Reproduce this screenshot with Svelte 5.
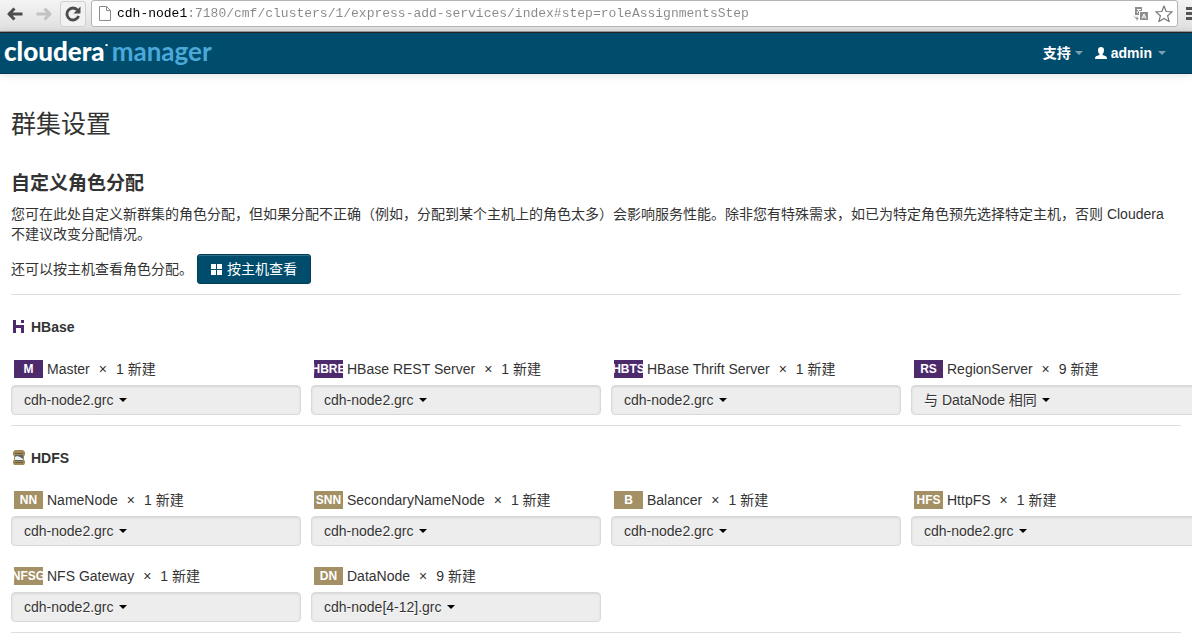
<script lang="ts">
  const url = 'cdh-node1:7180/cmf/clusters/1/express-add-services/index#step=roleAssignmentsStep';

  const services = [
    {
      id: 'hbase',
      name: 'HBase',
      roles: [
        { badge: 'M', name: 'Master', count: 1, host: 'cdh-node2.grc' },
        { badge: 'HBRE', name: 'HBase REST Server', count: 1, host: 'cdh-node2.grc' },
        { badge: 'HBTS', name: 'HBase Thrift Server', count: 1, host: 'cdh-node2.grc' },
        { badge: 'RS', name: 'RegionServer', count: 9, host: '与 DataNode 相同' }
      ]
    },
    {
      id: 'hdfs',
      name: 'HDFS',
      roles: [
        { badge: 'NN', name: 'NameNode', count: 1, host: 'cdh-node2.grc' },
        { badge: 'SNN', name: 'SecondaryNameNode', count: 1, host: 'cdh-node2.grc' },
        { badge: 'B', name: 'Balancer', count: 1, host: 'cdh-node2.grc' },
        { badge: 'HFS', name: 'HttpFS', count: 1, host: 'cdh-node2.grc' },
        { badge: 'NFSG', name: 'NFS Gateway', count: 1, host: 'cdh-node2.grc' },
        { badge: 'DN', name: 'DataNode', count: 9, host: 'cdh-node[4-12].grc' }
      ]
    }
  ];
</script>

<div class="window">
  <div class="toolbar">
    <button class="tool" aria-label="后退">
      <svg width="16" height="14" viewBox="0 0 16 14" fill="none" stroke="#4d4d4d" stroke-width="3" stroke-linejoin="round">
        <path d="M15.5 7H3M7.5 1.5L2 7L7.5 12.5" />
      </svg>
    </button>
    <button class="tool" aria-label="前进">
      <svg width="16" height="14" viewBox="0 0 16 14" fill="none" stroke="#c2c2c2" stroke-width="3" stroke-linejoin="round">
        <path d="M0.5 7H13M8.5 1.5L14 7L8.5 12.5" />
      </svg>
    </button>
    <button class="tool reload" aria-label="重新加载">
      <svg width="16" height="16" viewBox="0 0 16 16">
        <path d="M12.6 4.2A6 6 0 1 0 13.6 10" fill="none" stroke="#4d4d4d" stroke-width="2.8" />
        <path d="M15.5 0.5V7.5H8.5Z" fill="#4d4d4d" />
      </svg>
    </button>
    <div class="address">
      <svg width="12" height="15" viewBox="0 0 12 15" fill="#fff" stroke="#8a8a8a">
        <path d="M0.5 0.5H7.5L11.5 4.5V14.5H0.5ZM7.5 0.5V4.5H11.5" />
      </svg>
      <input type="text" value={url} aria-label="地址" spellcheck="false" />
      <button class="tool" aria-label="翻译此页">
        <svg width="15" height="14" viewBox="0 0 15 14">
          <path d="M1 0H8V4H5V8H1Z" fill="#8f8f8f" />
          <path d="M3 2.5H7M5 2.5L3 6" stroke="#fff" fill="none" />
          <path d="M6 5H14V13H6Z" fill="#8f8f8f" />
          <path d="M8 11.5L10 7L12 11.5M9 10H11" stroke="#fff" fill="none" />
          <path d="M0.5 9.5L2 11.5H4.5M3 9.5V13.5" stroke="#8f8f8f" fill="none" />
        </svg>
      </button>
      <button class="tool" aria-label="收藏">
        <svg width="18" height="18" viewBox="0 0 18 18" fill="#fff" stroke="#777" stroke-width="1.2" stroke-linejoin="round">
          <path d="M9 1L11.2 6.5L17.2 6.9L12.6 10.7L14.1 16.6L9 13.4L3.9 16.6L5.4 10.7L0.8 6.9L6.8 6.5Z" />
        </svg>
      </button>
    </div>
    <button class="tool menu" aria-label="菜单">
      <svg width="16" height="14" viewBox="0 0 16 14" fill="#555">
        <path d="M0 0H16V3H0ZM0 5H16V8H0ZM0 10H16V13H0Z" />
      </svg>
    </button>
  </div>

  <header>
    <a class="brand" href="#home"><b>cloudera</b><sup>•</sup><span>manager</span></a>
    <nav>
      <button>支持<i class="caret"></i></button>
      <button>
        <svg width="12" height="12" viewBox="0 0 12 12" fill="#fff">
          <path d="M3 3C3 1 4 0 6 0S9 1 9 3C9 5 8.4 6 7.6 7V8L11 9.2Q12 9.6 12 12H0Q0 9.6 1 9.2L4.4 8V7C3.6 6 3 5 3 3Z" />
        </svg>
        admin<i class="caret wide"></i>
      </button>
    </nav>
  </header>

  <main>
    <h1>群集设置</h1>
    <h2>自定义角色分配</h2>
    <p>
      您可在此处自定义新群集的角色分配，但如果分配不正确（例如，分配到某个主机上的角色太多）会影响服务性能。除非您有特殊需求，如已为特定角色预先选择特定主机，否则 Cloudera 不建议改变分配情况。
    </p>
    <div class="by-host">
      <span>还可以按主机查看角色分配。</span>
      <button class="primary">
        <svg width="12" height="11" viewBox="0 0 12 11" fill="#fff">
          <path d="M0 0H5V5H0ZM6 0H11V5H6ZM0 6H5V11H0ZM6 6H11V11H6Z" />
        </svg>
        按主机查看
      </button>
    </div>

    {#each services as service}
      <section class={service.id}>
        <h3>
          {#if service.id === 'hbase'}
            <svg width="14" height="16" viewBox="0 0 14 16" fill="#4d2a6c">
              <path d="M1 1H4V6H12V14H9V9H4V14H1ZM9 1H12V4H9Z" />
            </svg>
          {:else}
            <svg width="14" height="16" viewBox="0 0 14 16">
              <path d="M3 0H11L13 2V5L12 6V10L13 11V13L12 15H2L1 13V11L2 10V6L1 5V2Z" fill="#a08a58" />
              <path d="M3 3H11V4H3ZM3 12H11V13H3Z" fill="#6e5c36" />
              <path d="M3 5H11V11H3Z" fill="#5e6468" />
              <path d="M3 10V7L5 6L8 7L11 9V10Z" fill="#eef1f4" />
            </svg>
          {/if}
          {service.name}
        </h3>
        <div class="roles">
          {#each service.roles as role}
            {@const labelId = `${service.id}-${role.badge}`}
            <div class="role">
              <div class="label" id={labelId}>
                <span class="badge">{role.badge}</span>
                <span class="name">{role.name}</span>
                <span class="times">×</span>
                <span>{role.count} 新建</span>
              </div>
              <button class="hosts" aria-haspopup="true" aria-describedby={labelId}>
                {role.host}<i class="caret"></i>
              </button>
            </div>
          {/each}
        </div>
      </section>
    {/each}
  </main>
</div>

<style>
  :global(body) {
    background: #fff;
  }

  .window {
    overflow: hidden;
    color: #333;
    font: 14px/20px "Liberation Sans", "Noto Sans CJK SC", sans-serif;
  }

  button {
    padding: 0;
    border: 0;
    background: none;
    color: inherit;
    font: inherit;
    cursor: pointer;
  }

  svg {
    display: block;
    flex: none;
  }

  .caret {
    border: 4px solid transparent;
    border-top-color: currentColor;
    border-bottom: 0;
  }

  /* browser toolbar */
  .toolbar {
    display: flex;
    align-items: center;
    height: 32px;
    padding: 0 0 4px 7px;
    box-sizing: border-box;
    border-bottom: 1px solid #999;
    background: linear-gradient(#f4f4f4, #dfdfdf);
  }

  .tool {
    margin-right: 13px;
  }

  .reload {
    margin: 0 5px 0 -5px;
    padding: 4px;
    border: 1px solid #d0d0d0;
    border-radius: 3px;
    background: #f2f2f2;
  }

  .address {
    display: flex;
    flex: 1;
    align-items: center;
    height: 27px;
    padding-left: 7px;
    box-sizing: border-box;
    border: 1px solid #b4b4b4;
    border-radius: 3px;
    background: #fff;
  }

  .address .tool {
    margin: 0 4px 0 2px;
  }

  .address input {
    flex: 1;
    min-width: 0;
    padding: 0;
    margin-left: 6px;
    border: 0;
    outline: 0;
    /* host part is darker than the path */
    background: linear-gradient(to right, #000 9ch, #888 9ch);
    -webkit-background-clip: text;
    background-clip: text;
    color: transparent;
    font: 13px/20px "Liberation Mono", monospace;
  }

  .menu {
    width: 6px;
    margin: 0 0 0 8px;
    overflow: hidden;
  }

  /* application header */
  header {
    display: flex;
    align-items: center;
    justify-content: space-between;
    height: 42px;
    padding: 0 26px 0 4px;
    box-sizing: border-box;
    border-top: 1px solid #222;
    border-bottom: 1px solid #003a54;
    background: #004c6d;
    box-shadow: 0 1px 8px rgba(0, 0, 0, 0.12);
    color: #fff;
  }

  .brand {
    display: flex;
    padding-bottom: 4px;
    color: #fff;
    font: 26px/32px Lato, sans-serif;
    text-decoration: none;
  }

  .brand b {
    font-weight: 900;
  }

  .brand sup {
    width: 7px;
    font-size: 6px;
    line-height: 20px;
  }

  .brand span {
    color: #4ba9d9;
    font-weight: 700;
  }

  nav {
    display: flex;
    gap: 12px;
    font-weight: 700;
  }

  nav button {
    display: flex;
    align-items: center;
    gap: 4px;
  }

  nav .caret {
    border-top-color: #809fb0;
  }

  nav .wide {
    margin-left: 2px;
  }

  main {
    padding: 30px 11px 0;
  }

  h1 {
    margin: 0 0 20px;
    font-size: 25px;
    font-weight: 400;
    line-height: 40px;
  }

  h2 {
    margin: 0;
    font-size: 19px;
    line-height: 40px;
    font-weight: 700;
  }

  p {
    margin: 0 0 10px;
  }

  .by-host {
    display: flex;
    align-items: center;
    gap: 4px;
    padding-bottom: 10px;
  }

  .primary {
    display: flex;
    align-items: center;
    gap: 4px;
    height: 30px;
    padding: 0 13px;
    border: 1px solid #003d58;
    border-radius: 3px;
    background: #004c6d;
    box-shadow: inset 0 1px 0 rgba(255, 255, 255, 0.2);
    color: #fff;
  }

  section {
    padding-bottom: 10px;
    border-top: 1px solid #ddd;
  }

  section:last-child {
    border-bottom: 1px solid #ddd;
  }

  h3 {
    display: flex;
    align-items: center;
    gap: 5px;
    margin: 22px 0;
    padding-left: 1px;
    font-size: 14px;
    line-height: 20px;
  }

  /* the row runs past the rule on the right */
  .roles {
    display: grid;
    grid-template-columns: repeat(4, 1fr);
    gap: 20px 10px;
    margin-right: -20px;
  }

  .label {
    display: flex;
    align-items: center;
    height: 20px;
    padding: 0 0 6px 3px;
  }

  .badge {
    display: flex;
    justify-content: center;
    width: 29px;
    height: 18px;
    margin-right: 4px;
    overflow: hidden;
    color: #fff;
    font-size: 12px;
    font-weight: 700;
    line-height: 18px;
  }

  .hbase .badge {
    background: #4d2a6c;
  }

  .hdfs .badge {
    background: #a39064;
  }

  .times {
    margin: 0 9px;
  }

  .hosts {
    display: flex;
    align-items: center;
    gap: 5px;
    width: 100%;
    height: 30px;
    padding: 0 12px;
    border: 1px solid #d9d9d9;
    border-radius: 4px;
    background: #ededed;
    box-shadow: inset 0 1px 2px rgba(0, 0, 0, 0.1);
    text-shadow: 0 1px 0 #fff;
  }

  .hosts .caret {
    border-top-color: #000;
  }
</style>
